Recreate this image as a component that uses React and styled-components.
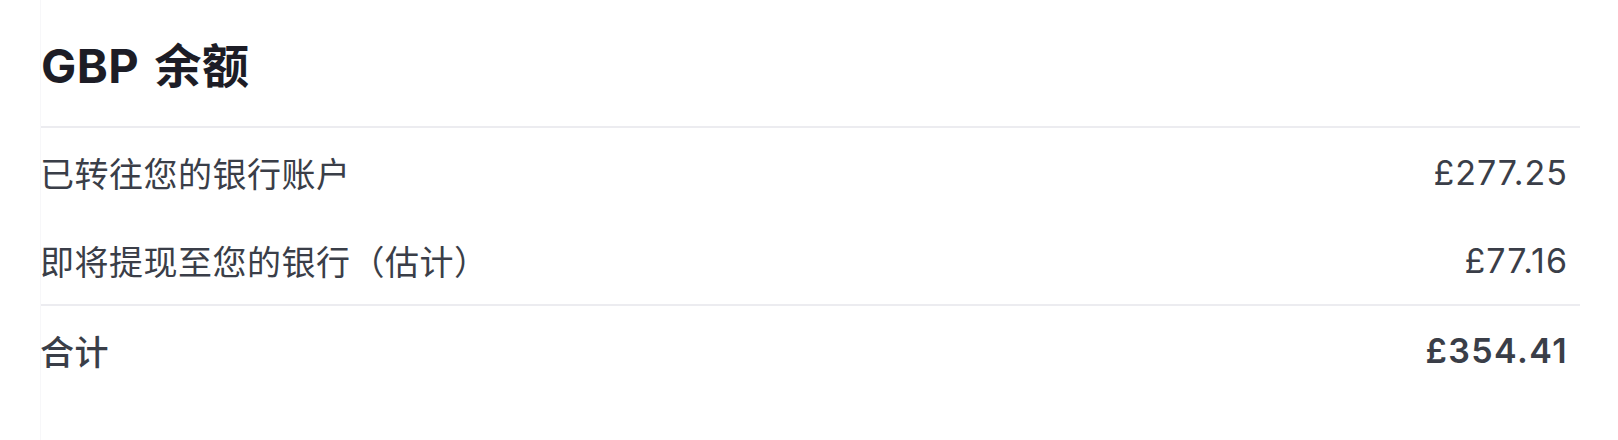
import React from 'react';
import styled, { createGlobalStyle } from 'styled-components';

const GlobalStyle = createGlobalStyle`
  html, body {
    margin: 0;
    padding: 0;
    background: #ffffff;
  }
  body {
    font-family: Inter, "Noto Sans CJK SC", "Noto Sans", sans-serif;
    -webkit-font-smoothing: antialiased;
  }
`;

const Card = styled.section`
  margin-left: 40px;
  width: 1540px;
  min-height: 440px;
  border-left: 1px solid #f7f7f9;
  box-sizing: border-box;
`;

const Title = styled.h2`
  margin: 0;
  height: 126px;
  display: flex;
  align-items: center;
  padding-bottom: 2px;
  box-sizing: border-box;
  font-size: 47px;
  font-weight: 700;
  color: #1d1d26;
  letter-spacing: 0.4px;
  word-spacing: 4px;
`;

const Section = styled.div`
  border-top: 2px solid #ececf0;
`;

const Row = styled.div`
  display: flex;
  align-items: center;
  justify-content: space-between;
  height: 88px;
  padding-right: 12px;
  font-size: 34px;
  color: #3a3e48;
  font-weight: ${(p) => (p.$strong ? 500 : 400)};
`;

const Label = styled.span`
  margin-left: -1px;
  letter-spacing: 0.5px;
`;

const Amount = styled.span`
  font-weight: ${(p) => (p.$strong ? 600 : 400)};
  letter-spacing: ${(p) => (p.$strong ? '1.4px' : '1px')};
`;

const rows = [
  { label: '已转往您的银行账户', amount: '£277.25' },
  { label: '即将提现至您的银行（估计）', amount: '£77.16' },
];

export default function App() {
  return (
    <>
      <GlobalStyle />
      <Card>
        <Title>GBP 余额</Title>
        <Section>
          {rows.map((r) => (
            <Row key={r.label}>
              <Label>{r.label}</Label>
              <Amount>{r.amount}</Amount>
            </Row>
          ))}
        </Section>
        <Section>
          <Row $strong>
            <Label>合计</Label>
            <Amount $strong>£354.41</Amount>
          </Row>
        </Section>
      </Card>
    </>
  );
}
